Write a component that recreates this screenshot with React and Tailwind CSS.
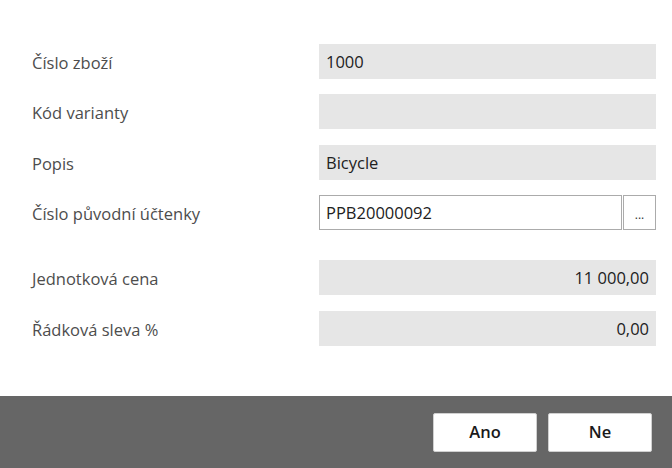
export default function App() {
  const labelCls = "w-[319px] pl-[32px] pt-[3px] text-[16.5px] text-[#4d4d4d]";
  const fieldCls = "h-[35px] w-[337px] bg-[#e6e6e6] px-[7px] pt-[1px] flex items-center text-[16.5px] text-[#212121]";

  return (
    <div className="w-[672px] h-[468px] flex flex-col bg-white" style={{ fontFamily: '"Open Sans", "Noto Sans", sans-serif' }}>
      <div className="flex-1 pt-[44px]">
        <div className="flex items-center">
          <div className={labelCls}>Číslo zboží</div>
          <div className={fieldCls}>1000</div>
        </div>
        <div className="flex items-center mt-[15px]">
          <div className={labelCls}>Kód varianty</div>
          <div className={fieldCls}></div>
        </div>
        <div className="flex items-center mt-[16px]">
          <div className={labelCls}>Popis</div>
          <div className={fieldCls}>Bicycle</div>
        </div>
        <div className="flex items-center mt-[15px]">
          <div className={labelCls}>Číslo původní účtenky</div>
          <div className="flex h-[35px] w-[337px] gap-[1px]">
            <div className="flex-1 border border-[#ababab] bg-white px-[6px] pt-[1px] flex items-center text-[16.5px] text-[#212121]">
              PPB20000092
            </div>
            <button className="w-[33px] border border-[#ababab] bg-white text-[12px] text-[#333] flex items-center justify-center pt-[4px]">
              ...
            </button>
          </div>
        </div>
        <div className="flex items-center mt-[30px]">
          <div className={labelCls}>Jednotková cena</div>
          <div className={fieldCls + " justify-end"}>11 000,00</div>
        </div>
        <div className="flex items-center mt-[16px]">
          <div className={labelCls}>Řádková sleva %</div>
          <div className={fieldCls + " justify-end"}>0,00</div>
        </div>
      </div>
      <div className="h-[72px] bg-[#666666] flex items-center justify-end gap-[11px] pr-[20px]">
        <button className="w-[104px] h-[39px] bg-white rounded-[2px] border border-[#d0d0d0] text-[16.5px] font-semibold text-[#1a1a1a]">
          Ano
        </button>
        <button className="w-[104px] h-[39px] bg-white rounded-[2px] border border-[#d0d0d0] text-[16.5px] font-semibold text-[#1a1a1a]">
          Ne
        </button>
      </div>
    </div>
  );
}
